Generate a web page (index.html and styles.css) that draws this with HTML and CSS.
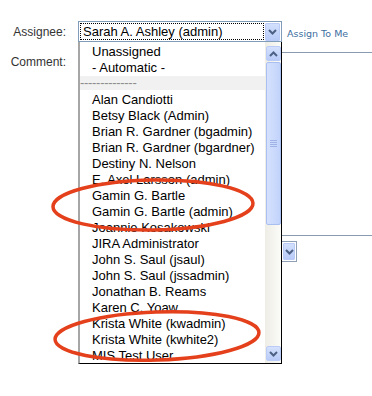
FILE: index.html
```html
<!DOCTYPE html>
<html lang="en">
<head>
    <meta charset="UTF-8">
    <title>Assign Issue</title>
    <link rel="stylesheet" href="styles.css">
</head>
<body>
    <div class="page">
        <div class="row">
            <label class="label">Assignee:</label>
            <div class="select">
                <span class="focus">Sarah A. Ashley (admin)</span>
                <span class="drop-btn">
                    <svg width="9" height="6" viewBox="0 0 9 6"><path d="M1 1 L4.5 4.5 L8 1" fill="none" stroke="#4d6185" stroke-width="2"/></svg>
                </span>
            </div>
            <a class="assign" href="#">Assign To Me</a>
        </div>

        <div class="row row-comment">
            <label class="label">Comment:</label>
            <div class="textarea"></div>
        </div>

        <div class="row row-level">
            <span class="label"></span>
            <div class="select select-small">
                <span class="drop-btn">
                    <svg width="9" height="6" viewBox="0 0 9 6"><path d="M1 1 L4.5 4.5 L8 1" fill="none" stroke="#4d6185" stroke-width="2"/></svg>
                </span>
            </div>
        </div>

        <!-- open dropdown list -->
        <div class="listbox">
            <ul class="options">
                <li>Unassigned</li>
                <li>- Automatic -</li>
                <li class="sep">--------------</li>
                <li>Alan Candiotti</li>
                <li>Betsy Black (Admin)</li>
                <li>Brian R. Gardner (bgadmin)</li>
                <li>Brian R. Gardner (bgardner)</li>
                <li>Destiny N. Nelson</li>
                <li>E. Axel Larsson (admin)</li>
                <li>Gamin G. Bartle</li>
                <li>Gamin G. Bartle (admin)</li>
                <li>Joannie Kosakowski</li>
                <li>JIRA Administrator</li>
                <li>John S. Saul (jsaul)</li>
                <li>John S. Saul (jssadmin)</li>
                <li>Jonathan B. Reams</li>
                <li>Karen C. Yoaw</li>
                <li>Krista White (kwadmin)</li>
                <li>Krista White (kwhite2)</li>
                <li>MIS Test User</li>
            </ul>
            <div class="scrollbar">
                <span class="sb-btn">
                    <svg width="9" height="6" viewBox="0 0 9 6"><path d="M1 5 L4.5 1.5 L8 5" fill="none" stroke="#4d6185" stroke-width="2"/></svg>
                </span>
                <span class="sb-thumb">
                    <svg width="7" height="7" viewBox="0 0 7 7"><path d="M0 0.5 H7 M0 2.5 H7 M0 4.5 H7 M0 6.5 H7" stroke="#9fb3e6" stroke-width="1"/></svg>
                </span>
                <span class="sb-track"></span>
                <span class="sb-btn">
                    <svg width="9" height="6" viewBox="0 0 9 6"><path d="M1 1 L4.5 4.5 L8 1" fill="none" stroke="#4d6185" stroke-width="2"/></svg>
                </span>
            </div>
        </div>

        <!-- hand-drawn highlight marks -->
        <svg class="marks" width="372" height="396" viewBox="0 0 372 396">
            <ellipse cx="153" cy="205" rx="100" ry="25" transform="rotate(-1 153 205)" fill="none" stroke="#e5401c" stroke-width="3.5"/>
            <ellipse cx="157" cy="336" rx="102" ry="24" transform="rotate(-2 157 336)" fill="none" stroke="#e5401c" stroke-width="3.5"/>
        </svg>
    </div>
</body>
</html>
```

FILE: styles.css
```css
body {
    margin: 0;
    padding: 0;
    background-color: #fff;
    font-family: "Liberation Sans", Arial, sans-serif;
    overflow: hidden;
}

.page {
    position: relative;
    width: 372px;
    height: 396px;
    padding-top: 21px;
    box-sizing: border-box;
    overflow: hidden;
}

.row {
    display: flex;
    align-items: center;
}

.label {
    width: 66px;
    flex-shrink: 0;
    text-align: right;
    font-size: 12px;
    color: #333;
}

.select {
    display: flex;
    width: 204px;
    height: 21px;
    margin-left: 12px;
    padding: 1px;
    box-sizing: border-box;
    border: 1px solid #7f9db9;
    flex-shrink: 0;
}

.focus {
    width: 185px;
    height: 17px;
    box-sizing: border-box;
    border: 1px dotted #000;
    padding-left: 2px;
    font-size: 13px;
    line-height: 15px;
    color: #000;
    white-space: nowrap;
    overflow: hidden;
}

.drop-btn {
    display: flex;
    align-items: center;
    justify-content: center;
    width: 15px;
    height: 18px;
    margin-left: 1px;
    margin-top: 0;
    box-sizing: border-box;
    border: 1px solid #b9cbf6;
    border-radius: 1px;
    background: linear-gradient(to bottom, #d3e0fd, #b8cbf8);
}

.assign {
    margin-left: 5px;
    font-family: "DejaVu Sans", Verdana, sans-serif;
    font-size: 9.5px;
    color: #3c6e9f;
    text-decoration: none;
    padding-top: 3px;
}

.row-comment {
    align-items: flex-start;
    margin-top: 10px;
}

.row-comment .label {
    padding-top: 3px;
}

.textarea {
    width: 320px;
    height: 184px;
    margin-left: 12px;
    box-sizing: border-box;
    border: 1px solid #8a9bb0;
    flex-shrink: 0;
}

.row-level {
    margin-top: 5px;
}

.select-small {
    width: 219px;
    justify-content: flex-end;
    border-color: #8e9fb6;
}

.select-small .drop-btn {
    width: 12px;
    height: 17px;
}

/* open list */
.listbox {
    position: absolute;
    left: 78px;
    top: 42px;
    width: 204px;
    height: 322px;
    box-sizing: border-box;
    display: flex;
    background-color: #fff;
    border-left: 2px solid #a6a6a6;
    border-right: 1px solid #000;
    border-bottom: 1px solid #000;
}

.options {
    flex: 1;
    margin: 0;
    padding: 2px 0 0;
    list-style: none;
    font-size: 13px;
    line-height: 16px;
    color: #000;
    overflow: hidden;
}

.options li {
    padding-left: 12px;
    white-space: nowrap;
}

.options .sep {
    padding-left: 0;
    color: #8c8c8c;
    background-color: #f1f1f1;
    line-height: 14px;
    height: 14px;
    margin-bottom: 2px;
    letter-spacing: -0.3px;
}

.scrollbar {
    width: 16px;
    display: flex;
    flex-direction: column;
    align-items: flex-end;
    padding: 4px 0 2px;
    box-sizing: border-box;
    background: linear-gradient(to right, #eeede6, #fbfbf8);
}

.sb-btn {
    display: flex;
    align-items: center;
    justify-content: center;
    width: 15px;
    height: 15px;
    box-sizing: border-box;
    border: 1px solid #b9cbf6;
    border-radius: 2px;
    background: linear-gradient(to bottom, #d5e1fd, #b8cbf8);
}

.sb-thumb {
    display: flex;
    align-items: center;
    justify-content: center;
    width: 15px;
    height: 163px;
    margin-top: 1px;
    box-sizing: border-box;
    border: 1px solid #aabff1;
    border-radius: 2px;
    background: linear-gradient(to right, #d5e1fd, #c2d3fb);
}

.sb-track {
    flex: 1;
}

.marks {
    position: absolute;
    left: 0;
    top: 0;
    pointer-events: none;
}
```
